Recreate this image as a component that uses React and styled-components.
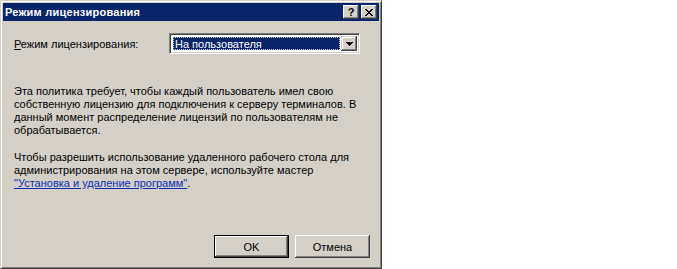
import React from "react";
import styled, { createGlobalStyle } from "styled-components";

const Global = createGlobalStyle`
  html, body { margin: 0; padding: 0; background: #ffffff; }
  body { font-family: Tahoma, "Liberation Sans", Arial, sans-serif; }
`;

const Frame = styled.div`
  width: 382px;
  height: 269px;
  box-sizing: border-box;
  background: #d4d0c8;
  border: 1px solid;
  border-color: #d4d0c8 #404040 #404040 #d4d0c8;
  box-shadow: inset 1px 1px #ffffff, inset -1px -1px #808080;
  padding: 2px;
  display: flex;
  flex-direction: column;
  font-family: Tahoma, "Liberation Sans", Arial, sans-serif;
  font-size: 11px;
  color: #000;
`;

const TitleBar = styled.div`
  height: 18px;
  background: #0a246a;
  display: flex;
  align-items: center;
  padding: 0 2px 0 2px;
`;

const TitleText = styled.div`
  flex: 1;
  color: #fff;
  font-weight: bold;
  font-size: 11px;
  letter-spacing: 0.25px;
  white-space: nowrap;
`;

const CaptionButton = styled.div`
  width: 16px;
  height: 14px;
  box-sizing: border-box;
  background: #d4d0c8;
  box-shadow: inset -1px -1px #404040, inset 1px 1px #ffffff,
    inset -2px -2px #808080, inset 2px 2px #d4d0c8;
  margin-left: ${(p) => p.$gap || 0}px;
  display: flex;
  align-items: center;
  justify-content: center;
  font-weight: bold;
  font-size: 11px;
  line-height: 1;
  color: #000;
`;

const Body = styled.div`
  flex: 1;
  display: flex;
  flex-direction: column;
  padding: 12px 9px 8px 11px;
`;

const Row = styled.div`
  display: flex;
  align-items: center;
  height: 21px;
`;

const Label = styled.div`
  width: 155px;
  white-space: nowrap;
`;

const Mn = styled.span`
  text-decoration: underline;
`;

const Combo = styled.div`
  width: 191px;
  height: 21px;
  box-sizing: border-box;
  background: #fff;
  border: 1px solid;
  border-color: #808080 #ffffff #ffffff #808080;
  box-shadow: inset 1px 1px #404040, inset -1px -1px #d4d0c8;
  display: flex;
  align-items: stretch;
  padding: 2px;
`;

const Selected = styled.div`
  flex: 1;
  margin: 1px 1px 1px 1px;
  background: #0a246a;
  color: #fff;
  outline: 1px dotted #d4d0c8;
  outline-offset: -1px;
  display: flex;
  align-items: center;
  padding-left: 2px;
  white-space: nowrap;
`;

const DropButton = styled.div`
  width: 16px;
  box-sizing: border-box;
  background: #d4d0c8;
  box-shadow: inset -1px -1px #404040, inset 1px 1px #d4d0c8,
    inset -2px -2px #808080, inset 2px 2px #ffffff;
  display: flex;
  align-items: center;
  justify-content: center;
`;

const Para = styled.p`
  margin: ${(p) => p.$top}px 0 0 0;
  line-height: 13px;
  white-space: nowrap;
`;

const Link = styled.span`
  color: #0b2fb0;
  text-decoration: underline;
`;

const Buttons = styled.div`
  margin-top: auto;
  display: flex;
  justify-content: flex-end;
  gap: 6px;
`;

const Button = styled.div`
  width: 75px;
  height: 23px;
  box-sizing: border-box;
  background: #d4d0c8;
  display: flex;
  align-items: center;
  justify-content: center;
  border: ${(p) => (p.$default ? "1px solid #000" : "none")};
  box-shadow: ${(p) =>
    p.$default
      ? "inset -1px -1px #404040, inset 1px 1px #ffffff, inset -2px -2px #808080"
      : "inset -1px -1px #404040, inset 1px 1px #ffffff, inset -2px -2px #808080, inset 2px 2px #d4d0c8"};
`;

export default function App() {
  return (
    <>
      <Global />
      <Frame>
        <TitleBar>
          <TitleText>Режим лицензирования</TitleText>
          <CaptionButton>?</CaptionButton>
          <CaptionButton $gap={2}>
            <svg width="8" height="7" viewBox="0 0 8 7">
              <path
                d="M0 0h2v1h1v1h2V1h1V0h2v1H7v1H6v1H5v1h1v1h1v1h1v1H6V6H5V5H3v1H2v1H0V6h1V5h1V4h1V3H2V2H1V1H0z"
                fill="#000"
              />
            </svg>
          </CaptionButton>
        </TitleBar>
        <Body>
          <Row>
            <Label>
              <Mn>Р</Mn>ежим лицензирования:
            </Label>
            <Combo>
              <Selected>На пользователя</Selected>
              <DropButton>
                <svg width="7" height="4" viewBox="0 0 7 4">
                  <path d="M0 0h7v1H6v1H5v1H4v1H3V3H2V2H1V1H0z" fill="#000" />
                </svg>
              </DropButton>
            </Combo>
          </Row>
          <Para $top={31}>
            Эта политика требует, чтобы каждый пользователь имел свою
            <br />
            собственную лицензию для подключения к серверу терминалов. В
            <br />
            данный момент распределение лицензий по пользователям не
            <br />
            обрабатывается.
          </Para>
          <Para $top={14}>
            Чтобы разрешить использование удаленного рабочего стола для
            <br />
            администрирования на этом сервере, используйте мастер
            <br />
            <Link>"Установка и удаление программ"</Link>.
          </Para>
          <Buttons>
            <Button $default>OK</Button>
            <Button>Отмена</Button>
          </Buttons>
        </Body>
      </Frame>
    </>
  );
}
